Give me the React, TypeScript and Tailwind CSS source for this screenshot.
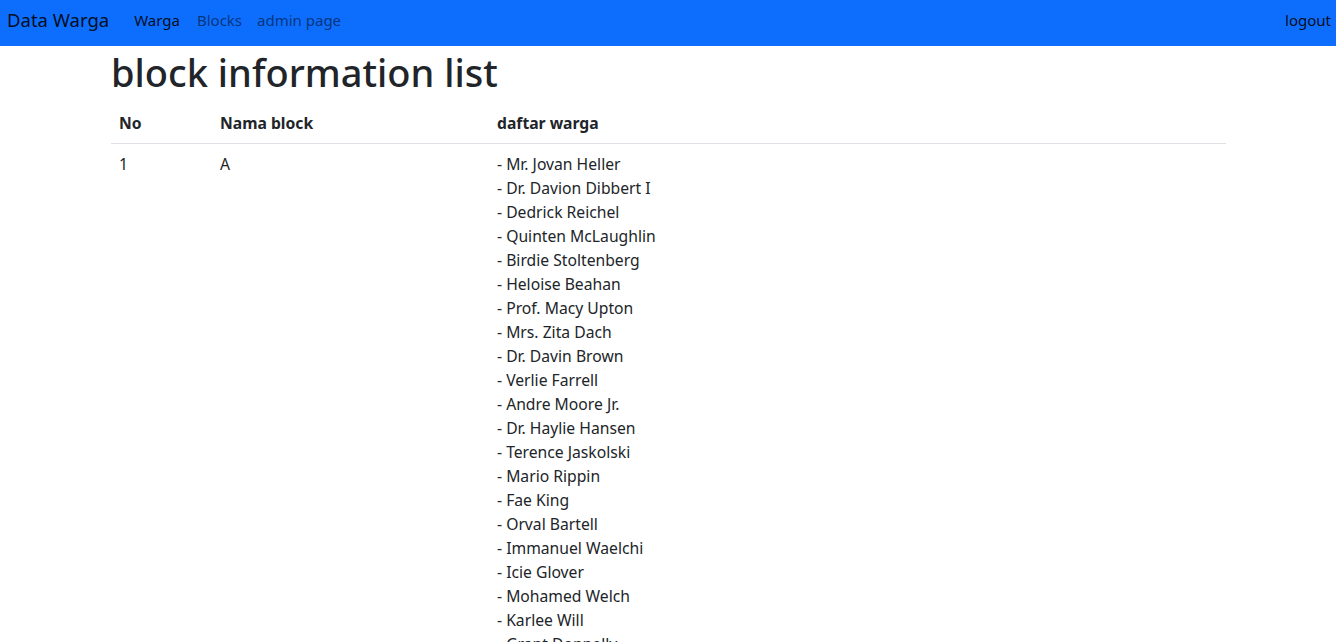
const names = [
  "Mr. Jovan Heller",
  "Dr. Davion Dibbert I",
  "Dedrick Reichel",
  "Quinten McLaughlin",
  "Birdie Stoltenberg",
  "Heloise Beahan",
  "Prof. Macy Upton",
  "Mrs. Zita Dach",
  "Dr. Davin Brown",
  "Verlie Farrell",
  "Andre Moore Jr.",
  "Dr. Haylie Hansen",
  "Terence Jaskolski",
  "Mario Rippin",
  "Fae King",
  "Orval Bartell",
  "Immanuel Waelchi",
  "Icie Glover",
  "Mohamed Welch",
  "Karlee Will",
  "Grant Donnelly",
  "Lonnie Kuhn",
];

export default function App() {
  return (
    <div className="min-h-screen bg-white text-[#212529] font-['Noto_Sans',sans-serif] text-base leading-6">
      {/* Navbar */}
      <nav className="h-[46px] bg-[#0d6efd] flex items-center justify-between pl-[7px] pr-[5px] pb-[6px]">
        <div className="flex items-center">
          <a className="text-[18.5px] text-black/90 mr-[25px]">Data Warga</a>
          <a className="text-[15px] text-black/90 mr-[17px]">Warga</a>
          <a className="text-[15px] text-black/55 mr-[15px]">Blocks</a>
          <a className="text-[15px] text-black/55">admin page</a>
        </div>
        <a className="text-[15px] text-black/90">logout</a>
      </nav>

      {/* Content */}
      <div className="w-[1116px] mx-auto pl-px">
        <h1 className="text-[38px] font-medium leading-[45px] pt-1 mb-2">block information list</h1>
        <table className="w-full text-left border-collapse text-[15.7px]">
          <thead>
            <tr className="border-b border-[#dee2e6]">
              <th className="w-[101px] p-2 font-bold">No</th>
              <th className="w-[277px] p-2 font-bold">Nama block</th>
              <th className="p-2 font-bold">daftar warga</th>
            </tr>
          </thead>
          <tbody>
            <tr className="align-top">
              <td className="p-2">1</td>
              <td className="p-2">A</td>
              <td className="p-2">
                {names.map((n) => (
                  <div key={n}>- {n}</div>
                ))}
              </td>
            </tr>
          </tbody>
        </table>
      </div>
    </div>
  );
}
